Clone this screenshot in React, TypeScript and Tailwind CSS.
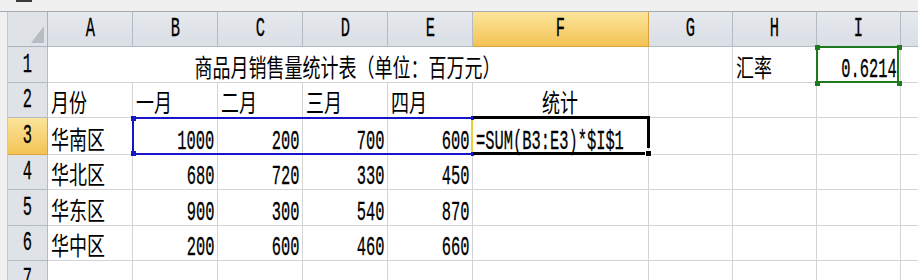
import React from 'react';

const LAT = "font-['Liberation_Mono','Noto_Sans_CJK_SC',monospace] [-webkit-text-stroke:0.3px_black]";
const CJK = "font-['Noto_Sans_CJK_SC','Liberation_Sans',sans-serif]";

type Align = 'left' | 'right' | 'center';

const COLS = ['A', 'B', 'C', 'D', 'E', 'F', 'G', 'H', 'I'];

// a cell value: [text, is chinese, alignment]
type Val = [string, boolean, Align] | null;

const rows: Val[][] = [
  [null, null, null, null, null, null, null, ['汇率', true, 'left'], ['0.6214', false, 'right']],
  [
    ['月份', true, 'left'],
    ['一月', true, 'left'],
    ['二月', true, 'left'],
    ['三月', true, 'left'],
    ['四月', true, 'left'],
    ['统计', true, 'center'],
    null, null, null,
  ],
  [
    ['华南区', true, 'left'],
    ['1000', false, 'right'],
    ['200', false, 'right'],
    ['700', false, 'right'],
    ['600', false, 'right'],
    ['=SUM(B3:E3)*$I$1', false, 'left'],
    null, null, null,
  ],
  [['华北区', true, 'left'], ['680', false, 'right'], ['720', false, 'right'], ['330', false, 'right'], ['450', false, 'right'], null, null, null, null],
  [['华东区', true, 'left'], ['900', false, 'right'], ['300', false, 'right'], ['540', false, 'right'], ['870', false, 'right'], null, null, null, null],
  [['华中区', true, 'left'], ['200', false, 'right'], ['600', false, 'right'], ['460', false, 'right'], ['660', false, 'right'], null, null, null, null],
  [null, null, null, null, null, null, null, null, null],
];

const Txt = ({ text, cjk, align }: { text: string; cjk: boolean; align: Align }) => {
  const origin = align === 'right' ? 'origin-right' : align === 'center' ? 'origin-center' : 'origin-left';
  const font = cjk
    ? `${CJK} text-[25px] leading-[25px] scale-x-[0.72] pb-[3px]`
    : `${LAT} text-[28px] leading-[24px] scale-x-[0.55]`;
  return <span className={`inline-block shrink-0 whitespace-nowrap text-black ${origin} ${font}`}>{text}</span>;
};

// selection / reference borders drawn over the sheet
const overlays: Record<string, React.ReactNode> = {
  // B3:E3 reference (blue)
  '3-1': (
    <svg className="pointer-events-none absolute -top-[4px] -left-[4px] z-10" width="349" height="46">
      <rect x="4" y="4" width="339" height="36" fill="none" stroke="#1616c8" strokeWidth="2" />
      <rect x="342" y="3" width="2" height="38" fill="#e8d23a" />
      <rect x="2" y="2" width="5" height="5" fill="#1616c8" />
      <rect x="2" y="37" width="5" height="5" fill="#1616c8" />
      <rect x="342" y="2" width="3" height="4" fill="#1616c8" />
      <rect x="342" y="38" width="3" height="4" fill="#1616c8" />
    </svg>
  ),
  // active cell F3
  '3-5': (
    <svg className="pointer-events-none absolute -top-[2px] left-0 z-10" width="181" height="42">
      <rect x="0" y="0" width="177" height="3" fill="#000" />
      <rect x="174" y="0" width="3" height="32" fill="#000" />
      <rect x="0" y="36" width="173" height="3" fill="#000" />
      <rect x="172" y="34" width="7" height="7" fill="#fff" />
      <rect x="173" y="35" width="5" height="5" fill="#000" />
    </svg>
  ),
  // I1 reference (green)
  '1-8': (
    <svg className="pointer-events-none absolute -top-[4px] -left-[4px] z-10" width="93" height="45">
      <rect x="4" y="4" width="81" height="35" fill="none" stroke="#1d7a1d" strokeWidth="2" />
      <rect x="2" y="2" width="5" height="5" fill="#1d7a1d" />
      <rect x="84" y="2" width="5" height="5" fill="#1d7a1d" />
      <rect x="2" y="38" width="5" height="5" fill="#1d7a1d" />
      <rect x="84" y="38" width="5" height="5" fill="#1d7a1d" />
    </svg>
  ),
};

const Cell = ({ v, extra }: { v: Val; extra?: React.ReactNode }) => {
  const justify = !v ? '' : v[2] === 'right' ? 'justify-end' : v[2] === 'center' ? 'justify-center' : 'justify-start';
  return (
    <div className={`relative flex items-end px-[3px] border-r border-b border-[#d4d4d4] ${justify}`}>
      {v && <Txt text={v[0]} cjk={v[1]} align={v[2]} />}
      {extra}
    </div>
  );
};

const HeadLabel = ({ text }: { text: string }) => (
  <span className={`inline-block scale-x-[0.55] origin-center text-[28px] leading-none text-black ${LAT}`}>{text}</span>
);

export default function App() {
  return (
    <div className="h-[280px] w-[918px] overflow-hidden bg-[#f0f0f0]">
      {/* strip above the sheet */}
      <div className="h-[12px] border-b border-[#a7abb0] pl-[16px]">
        <div className="h-[2px] w-[16px] bg-[#3a3a3a]" />
      </div>
      <div className="flex">
        <div className="w-[8px] shrink-0 border-r border-[#c4c8cc]" />
        <div className="grid flex-1 grid-cols-[40px_85px_85px_85px_85px_85px_176px_84px_84px_84px_1fr] grid-rows-[35px_36px_35px_37px_35px_36px_35px_36px] bg-white">
          {/* corner */}
          <div className="flex items-end justify-end border-r border-b border-[#a9b2bd] bg-[#dfe3e8] pr-[3px] pb-[3px]">
            <svg width="13" height="17" viewBox="0 0 13 17">
              <polygon points="13,0 13,17 0,17" fill="#b7bcc2" />
            </svg>
          </div>
          {COLS.map((c) => (
            <div
              key={c}
              className={`flex items-center justify-center border-r border-b ${
                c === 'F'
                  ? 'border-[#d9a43a] bg-linear-to-b from-[#fbe49a] to-[#f3c352]'
                  : 'border-[#b3bbc5] bg-linear-to-b from-[#e6e9ee] to-[#dadfe5]'
              }`}
            >
              <HeadLabel text={c} />
            </div>
          ))}
          <div className="border-b border-[#b3bbc5] bg-linear-to-b from-[#e6e9ee] to-[#dadfe5]" />

          {rows.map((r, i) => {
            const n = i + 1;
            return (
              <React.Fragment key={n}>
                <div
                  className={`flex items-center justify-center border-r border-b ${
                    n === 3
                      ? 'border-[#d9a43a] bg-linear-to-b from-[#fbe49a] to-[#f3c352]'
                      : 'border-[#b3bbc5] bg-[#dfe3e8]'
                  }`}
                >
                  <HeadLabel text={String(n)} />
                </div>
                {n === 1 && (
                  <div className="col-span-6 flex items-end justify-center border-r border-b border-[#d4d4d4]">
                    <Txt text="商品月销售量统计表（单位：百万元）" cjk align="center" />
                  </div>
                )}
                {r.map((v, j) =>
                  n === 1 && j < 6 ? null : <Cell key={j} v={v} extra={overlays[`${n}-${j}`]} />
                )}
                <div className="border-b border-[#d4d4d4]" />
              </React.Fragment>
            );
          })}
        </div>
      </div>
    </div>
  );
}
